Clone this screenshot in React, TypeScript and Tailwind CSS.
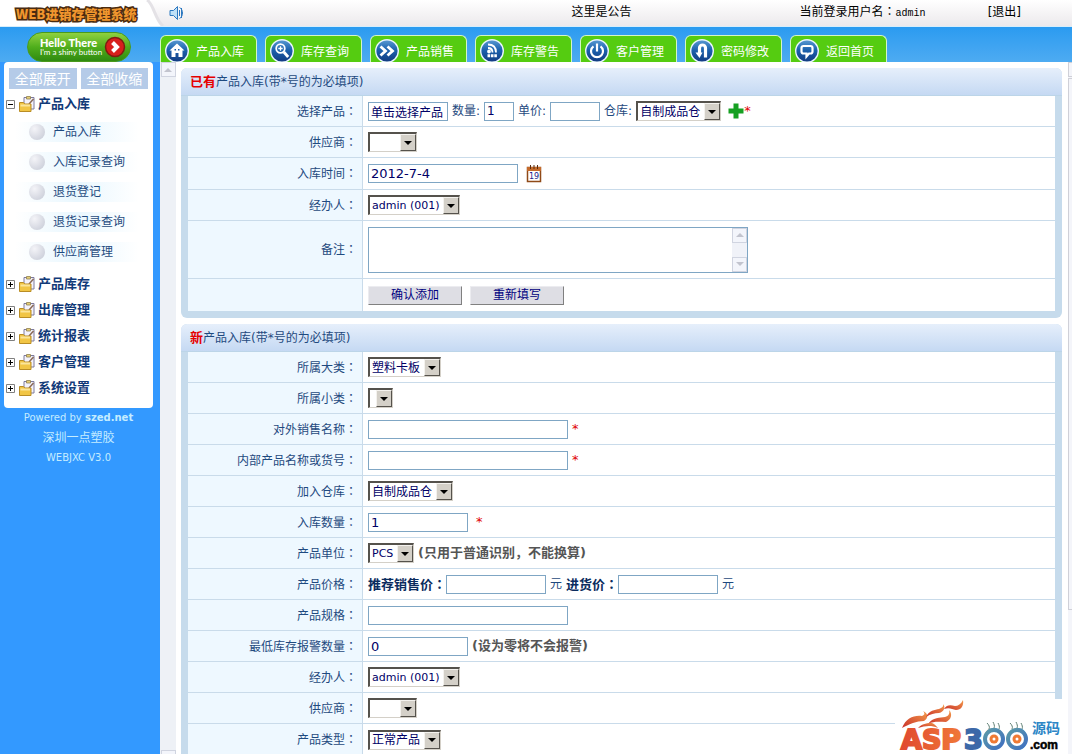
import { useState, type ReactNode } from "react";

const tabs = [
  { label: "产品入库", icon: "home" },
  { label: "库存查询", icon: "search" },
  { label: "产品销售", icon: "forward" },
  { label: "库存警告", icon: "rss" },
  { label: "客户管理", icon: "power" },
  { label: "密码修改", icon: "turn" },
  { label: "返回首页", icon: "chat" },
];

const openItems = ["产品入库", "入库记录查询", "退货登记", "退货记录查询", "供应商管理"];
const closedGroups = ["产品库存", "出库管理", "统计报表", "客户管理", "系统设置"];

function TabGlyph({ name }: { name: string }) {
  switch (name) {
    case "home":
      return (
        <g>
          <path d="M12 4.5 4.5 11.500h2V18h4v-4h3v4h4v-6.500h2z" fill="#fff" />
          <path d="M9.500 10h1.500v1.500H9.500zM13 10h1.500v1.500H13z" fill="#1c62ae" />
        </g>
      );
    case "search":
      return (
        <g fill="none" stroke="#fff" strokeWidth="1.8">
          <circle cx="10.5" cy="9.5" r="4.3" />
          <path d="M8.3 9.5h4.4M10.5 7.3v4.4" strokeWidth="1.3" />
          <path d="m13.8 13 4.4 5" strokeWidth="2.8" />
        </g>
      );
    case "forward":
      return <path d="m5.500 7.500 5 4.500-5 4.500M12.500 7.500l5 4.500-5 4.500" fill="none" stroke="#fff" strokeWidth="2.8" />;
    case "rss":
      return (
        <g fill="none" stroke="#fff" strokeWidth="1.8">
          <path d="M8 5.500c5 0 8 3 8 8M8 9c3 0 4.500 1.500 4.500 4.500" />
          <circle cx="9" cy="12.500" r="1" fill="#fff" />
          <path d="M7.500 16.800h9.500" strokeWidth="3" strokeDasharray="2.600 .8" />
        </g>
      );
    case "power":
      return (
        <g fill="none" stroke="#fff" strokeWidth="2.200">
          <path d="M8.500 7.300a6 6 0 1 0 7 0" />
          <path d="M12 4.500v8" />
        </g>
      );
    case "turn":
      return (
        <g>
          <path d="M15.500 18.500V9a3 3 0 0 0-6 0v6" fill="none" stroke="#fff" strokeWidth="3.200" />
          <path d="M5.500 13.500h7L9.500 19z" fill="#fff" />
        </g>
      );
    default:
      return (
        <path
          d="M8.500 7h7a2 2 0 0 1 2 2v3.500a2 2 0 0 1-2 2h-1.500l-2.500 3v-3h-3a2 2 0 0 1-2-2V9a2 2 0 0 1 2-2z"
          fill="none"
          stroke="#fff"
          strokeWidth="2.200"
        />
      );
  }
}

function TabIcon({ name }: { name: string }) {
  return (
    <svg viewBox="0 0 24 24" className="size-6 shrink-0" aria-hidden="true">
      <defs>
        <linearGradient id={`tab-${name}`} x1="0" y1="0" x2="0" y2="1">
          <stop offset="0" stopColor="#5b9bd3" />
          <stop offset=".45" stopColor="#1c62ae" />
          <stop offset="1" stopColor="#123a80" />
        </linearGradient>
      </defs>
      <circle cx="12" cy="12" r="11.3" fill={`url(#tab-${name})`} stroke="#e8f4fb" strokeWidth="1.4" />
      <TabGlyph name={name} />
    </svg>
  );
}

function FolderIcon() {
  return (
    <svg viewBox="0 0 16 16" className="size-4 shrink-0" aria-hidden="true">
      <path d="M5 1.500h10v11.500H5z" fill="#f4f2fb" stroke="#7d7a9c" />
      <path d="M7.500.5h4v2.500h-4z" fill="#e7cf77" stroke="#8f8050" strokeWidth=".8" />
      <path d="m10 8 4.500-5" stroke="#8a6a58" strokeWidth="1.500" />
      <path d="M.5 6.500h4l1.200 1.500H12v7.500H.5z" fill="#f1c545" stroke="#b98d25" />
      <path d="M1.500 8.500h9.500v2H1.500z" fill="#fbe59a" />
    </svg>
  );
}

function ToggleBox({ open }: { open: boolean }) {
  return (
    <svg viewBox="0 0 9 9" className="size-[9px] shrink-0" aria-hidden="true">
      <path d="M.5.5h8v8h-8z" fill="#fff" stroke="#808080" />
      <path d={open ? "M2 4.500h5" : "M2 4.500h5M4.500 2v5"} stroke="#000" />
    </svg>
  );
}

// Full-width colon that sits in the middle of its square
function Colon() {
  return <span className="font-['Noto_Sans_CJK_TC',sans-serif]">：</span>;
}

function Required() {
  return <span className="text-[13px] text-[#e00000]">*</span>;
}

function Select({ label, value, className }: { label: string; value: string; className: string }) {
  return (
    <span className={`relative inline-block h-5 shrink-0 ${className}`}>
      <select
        aria-label={label}
        className="block h-5 w-full appearance-none border border-t-2 border-l-2 border-[#d4d0c8] border-t-[#55524c] border-l-[#55524c] bg-white pl-[2px] text-[#000066]"
      >
        <option>{value}</option>
      </select>
      <span className="pointer-events-none absolute top-[2px] right-px flex h-[17px] w-4 items-center justify-center border border-[#f4f2ee] border-r-[#55524c] border-b-[#55524c] bg-[#d4d0c8]">
        <svg viewBox="0 0 8 4" className="h-1 w-2" aria-hidden="true">
          <path d="M0 0h8L4 4z" fill="#000" />
        </svg>
      </span>
    </span>
  );
}

function TextBox({ label, value = "", className }: { label: string; value?: string; className: string }) {
  return (
    <input
      type="text"
      aria-label={label}
      defaultValue={value}
      className={`h-[19px] shrink-0 border border-[#7fa6c4] bg-white px-[2px] text-[#000066] outline-none ${className}`}
    />
  );
}

function Row({
  label,
  height = "min-h-[31px]",
  children,
}: {
  label?: string;
  height?: string;
  children: ReactNode;
}) {
  return (
    <div className={`flex border-b border-[#c9dbea] last:border-b-0 ${height}`}>
      <div className="flex w-[175px] shrink-0 items-center justify-end border-r border-[#c9dbea] bg-[#eef8ff] pr-[5px]">
        {label ? (
          <span>
            {label}
            <Colon />
          </span>
        ) : null}
      </div>
      <div className="flex flex-1 items-center gap-1 px-[5px] whitespace-nowrap">{children}</div>
    </div>
  );
}

function Panel({ mark, children }: { mark: ReactNode; children: ReactNode }) {
  return (
    <section className="rounded-md bg-[#c6dbec] px-[7px] pb-[7px]">
      <h2 className="-mx-[7px] flex h-7 items-center rounded-t-md border-b border-[#bcd5e8] bg-linear-to-b from-[#e6effb] to-[#c5d9f3] pl-[9px]">
        <span>
          {mark}
          产品入库(带*号的为必填项)
        </span>
      </h2>
      <div className="bg-white">{children}</div>
    </section>
  );
}

function ArrowBox({ down }: { down?: boolean }) {
  return (
    <span className="flex h-[15px] w-[15px] items-center justify-center border border-[#d0d4e0] bg-[#f3f5fb]">
      <svg viewBox="0 0 8 4" className="h-1 w-2" aria-hidden="true">
        <path d={down ? "M0 0h8L4 4z" : "M0 4h8L4 0z"} fill="#c2c4ce" />
      </svg>
    </span>
  );
}

function Header() {
  return (
    <header className="shrink-0">
      <div className="flex h-[27px] items-center border-b border-[#d8eefb] bg-linear-to-b from-white to-[#ece9ec]">
        <div className="flex h-full w-[142px] shrink-0 items-center bg-white pt-[2px] pl-4">
          <span className="font-['Noto_Sans_CJK_SC',sans-serif] text-[13px] leading-5 font-black whitespace-nowrap text-[#f0962e] [paint-order:stroke] [-webkit-text-stroke:3px_#4a2c10]">
            WEB进销存管理系统
          </span>
        </div>
        <svg viewBox="0 0 22 26" className="h-[26px] w-[22px] shrink-0" aria-hidden="true">
          <path d="M0 0h5c7 4 8 20 16 26H0z" fill="#fff" />
          <path d="M5 0c7 4 8 20 16 26" fill="none" stroke="#e4e2e6" strokeWidth="3" />
        </svg>
        <svg viewBox="0 0 16 16" className="ml-[5px] size-4 shrink-0" fill="none" stroke="#2d78c0" aria-hidden="true">
          <path d="M1 5.500h3.500l4-4v13l-4-4H1z" fill="#bfe0f7" />
          <path d="M10.500 5v6M12.500 3v10" />
          <path d="M10.500 2.500c4 2 4 9 0 11" />
        </svg>
        <div className="flex min-w-0 flex-1 items-center justify-end pb-[2px] text-black">
          <span className="mr-[168px]">这里是公告</span>
          <span className="mr-[62px]">
            当前登录用户名
            <Colon />
            <span className="font-['Liberation_Mono',monospace] text-[10px]">admin</span>
          </span>
          <a href="#logout" className="mr-[51px]">
            [退出]
          </a>
        </div>
      </div>
      <div className="flex h-[35px] items-end bg-linear-to-b from-[#2a9bf0] to-[#4dabf2]">
        <div className="w-[160px] shrink-0 pl-[27px]">
          <button
            type="button"
            className="flex h-[30px] w-[104px] items-center justify-between rounded-full border border-[#4a9a1c] bg-linear-to-b from-[#8fd13f] via-[#4fae1c] to-[#2f8a10] pr-1 pl-3 text-left text-white"
          >
            <span className="font-['Lato',sans-serif] whitespace-nowrap">
              <span className="block text-[11px] leading-[11px] font-black">Hello There</span>
              <span className="block text-[8px] leading-[9px]">I'm a shiny button</span>
            </span>
            <svg viewBox="0 0 22 22" className="size-[22px] shrink-0" aria-hidden="true">
              <circle cx="11" cy="11" r="9.500" fill="#d81f1c" stroke="#7e1e10" strokeWidth="1.500" />
              <path d="m8.500 6.500 4.500 4.500-4.500 4.500" fill="none" stroke="#fff" strokeWidth="4" />
            </svg>
          </button>
        </div>
        <nav className="flex gap-2">
          {tabs.map((tab) => (
            <a
              key={tab.label}
              href={`#${tab.icon}`}
              className="flex h-[27px] w-[97px] shrink-0 items-center gap-[7px] overflow-hidden rounded-t-md border border-b-0 border-[#d5f5c8] bg-[#55cc11] pl-1 text-white"
            >
              <span className="pt-1">
                <TabIcon name={tab.icon} />
              </span>
              <span className="pt-[5px]">{tab.label}</span>
            </a>
          ))}
        </nav>
      </div>
    </header>
  );
}

function Sidebar() {
  const [expanded, setExpanded] = useState(true);

  return (
    <aside className="w-[160px] shrink-0 bg-[#3399ff] pr-[7px] pl-1">
      <div className="rounded-[4px] bg-white pt-[6px] pb-[7px]">
        <div className="flex gap-1 px-[5px] text-[14px] leading-5 text-white [text-shadow:1px_1px_0_#8fa9cc]">
          <button type="button" onClick={() => setExpanded(true)} className="h-[21px] flex-1 bg-[#b5cbe8]">
            全部展开
          </button>
          <button type="button" onClick={() => setExpanded(false)} className="h-[21px] flex-1 bg-[#b5cbe8]">
            全部收缩
          </button>
        </div>
        <button
          type="button"
          onClick={() => setExpanded((current) => !current)}
          className="mt-[2px] flex h-[26px] items-center pl-[2px] text-[13px] font-bold text-[#123a78]"
        >
          <ToggleBox open={expanded} />
          <span className="mr-[3px] ml-1">
            <FolderIcon />
          </span>
          产品入库
        </button>
        {expanded && (
          <ul className="pb-1">
            {openItems.map((item) => (
              <li key={item} className="flex h-[30px] items-center pl-[11px]">
                <a
                  href="#item"
                  className="flex h-5 w-[124px] items-center bg-linear-to-r from-white via-[#e9f7fe] to-white pl-[14px] text-[#1f4a80]"
                >
                  <span className="mr-2 size-4 rounded-full bg-radial-[at_35%_30%] from-[#f4f4f8] to-[#c4c8d4]" />
                  {item}
                </a>
              </li>
            ))}
          </ul>
        )}
        {closedGroups.map((group) => (
          <button
            key={group}
            type="button"
            className="flex h-[26px] items-center pl-[2px] text-[13px] font-bold text-[#123a78]"
          >
            <ToggleBox open={false} />
            <span className="mr-[3px] ml-1">
              <FolderIcon />
            </span>
            {group}
          </button>
        ))}
      </div>
      <div className="text-center text-[10px] leading-5 text-[#c4ecff]">
        <p>
          Powered by <b>szed.net</b>
        </p>
        <p className="text-[12px]">深圳一点塑胶</p>
        <p>WEBJXC V3.0</p>
      </div>
    </aside>
  );
}

function ExistingProductForm() {
  return (
    <Panel mark={<b className="text-[13px] text-[#e60000]">已有</b>}>
      <Row label="选择产品">
        <TextBox label="选择产品" value="单击选择产品" className="w-[80px] text-[12px]" />
        <span>数量:</span>
        <TextBox label="数量" value="1" className="w-[30px] text-[12px]" />
        <span>单价:</span>
        <TextBox label="单价" className="w-[50px] text-[12px]" />
        <span>仓库:</span>
        <Select label="仓库" value="自制成品仓" className="w-[85px] text-[12px]" />
        <span className="ml-[3px] flex items-center">
          <button type="button" aria-label="添加">
            <svg viewBox="0 0 16 16" className="size-4" aria-hidden="true">
              <path d="M5.500.5h5v5h5v5h-5v5h-5v-5h-5v-5h5z" fill="#16a022" />
            </svg>
          </button>
          <Required />
        </span>
      </Row>
      <Row label="供应商">
        <Select label="供应商" value="" className="w-[49px] text-[11px]" />
      </Row>
      <Row label="入库时间" height="min-h-8">
        <TextBox label="入库时间" value="2012-7-4" className="w-[150px] text-[13px]" />
        <button type="button" aria-label="选择日期" className="ml-1">
          <svg viewBox="0 0 16 18" className="h-[18px] w-4" aria-hidden="true">
            <path d="M1.500 2.500h13v14h-13z" fill="#fff" stroke="#8f4a18" strokeWidth="1.500" />
            <path d="M1 2h14v4H1z" fill="#c46a2a" />
            <path d="M4.500 0v4M8 0v4M11.500 0v4" stroke="#5c2c0c" />
            <text x="8" y="14" textAnchor="middle" fontSize="8" fontFamily="DejaVu Sans" fill="#20208c">
              19
            </text>
          </svg>
        </button>
      </Row>
      <Row label="经办人">
        <Select label="经办人" value="admin (001)" className="w-[92px] text-[11px]" />
      </Row>
      <Row label="备注" height="min-h-[58px]">
        <span className="relative inline-block">
          <textarea
            aria-label="备注"
            className="block h-[46px] w-[380px] resize-none border border-[#7fa6c4] bg-white pr-5 pl-1 outline-none [scrollbar-width:none]"
          />
          <span className="pointer-events-none absolute inset-y-px right-px flex flex-col justify-between bg-[#f0f2f8]">
            <ArrowBox />
            <ArrowBox down />
          </span>
        </span>
      </Row>
      <Row height="min-h-8">
        <button
          type="button"
          className="mr-1 h-[19px] w-[94px] border border-[#ececf0] border-r-[#808080] border-b-[#808080] bg-[#dedee4] leading-4 text-[#000080]"
        >
          确认添加
        </button>
        <button
          type="button"
          className="h-[19px] w-[94px] border border-[#ececf0] border-r-[#808080] border-b-[#808080] bg-[#dedee4] leading-4 text-[#000080]"
        >
          重新填写
        </button>
      </Row>
    </Panel>
  );
}

function NewProductForm() {
  return (
    <Panel mark={<b className="text-[13px] text-[#e60000]">新</b>}>
      <Row label="所属大类">
        <Select label="所属大类" value="塑料卡板" className="w-[73px] text-[12px]" />
      </Row>
      <Row label="所属小类">
        <Select label="所属小类" value="" className="w-[25px] text-[12px]" />
      </Row>
      <Row label="对外销售名称">
        <TextBox label="对外销售名称" className="w-[200px] text-[13px]" />
        <Required />
      </Row>
      <Row label="内部产品名称或货号">
        <TextBox label="内部产品名称或货号" className="w-[200px] text-[13px]" />
        <Required />
      </Row>
      <Row label="加入仓库">
        <Select label="加入仓库" value="自制成品仓" className="w-[85px] text-[12px]" />
      </Row>
      <Row label="入库数量">
        <TextBox label="入库数量" value="1" className="mr-1 w-[100px] text-[13px]" />
        <Required />
      </Row>
      <Row label="产品单位">
        <Select label="产品单位" value="PCS" className="w-[46px] text-[11px]" />
        <b className="text-[13px] text-[#555555]">(只用于普通识别，不能换算)</b>
      </Row>
      <Row label="产品价格">
        <label className="flex items-center">
          <b className="text-[13px] text-[#0b2c5e]">
            推荐销售价
            <Colon />
          </b>
          <TextBox label="推荐销售价" className="w-[100px] text-[13px]" />
        </label>
        <span>元</span>
        <label className="flex items-center">
          <b className="text-[13px] text-[#0b2c5e]">
            进货价
            <Colon />
          </b>
          <TextBox label="进货价" className="w-[100px] text-[13px]" />
        </label>
        <span>元</span>
      </Row>
      <Row label="产品规格">
        <TextBox label="产品规格" className="w-[200px] text-[13px]" />
      </Row>
      <Row label="最低库存报警数量">
        <TextBox label="最低库存报警数量" value="0" className="w-[100px] text-[13px]" />
        <b className="text-[13px] text-[#555555]">(设为零将不会报警)</b>
      </Row>
      <Row label="经办人">
        <Select label="经办人" value="admin (001)" className="w-[92px] text-[11px]" />
      </Row>
      <Row label="供应商">
        <Select label="供应商" value="" className="w-[49px] text-[11px]" />
      </Row>
      <Row label="产品类型">
        <Select label="产品类型" value="正常产品" className="w-[73px] text-[12px]" />
      </Row>
    </Panel>
  );
}

function Watermark() {
  return (
    <div className="pointer-events-none absolute right-[7px] bottom-0 bg-white">
      <svg viewBox="0 0 170 55" className="h-[55px] w-[170px]" role="img" aria-label="ASP300源码.com">
        <defs>
          <linearGradient id="flame" x1="0" y1="1" x2="1" y2="0">
            <stop offset="0" stopColor="#c9302a" />
            <stop offset="1" stopColor="#f39a4a" />
          </linearGradient>
          <linearGradient id="asp" x1="0" y1="0" x2="1" y2="0">
            <stop offset="0" stopColor="#e04a30" />
            <stop offset="1" stopColor="#f07838" />
          </linearGradient>
          <linearGradient id="ring" x1="0" y1="0" x2="1" y2="1">
            <stop offset="0" stopColor="#5a9aa8" />
            <stop offset="1" stopColor="#3f6fc0" />
          </linearGradient>
        </defs>
        <path d="M7 29c4-10 12-13 20-12 3-1 3-3 1-5 5 2 6 7 1 10-8 0-14 3-22 7z" fill="url(#flame)" />
        <path d="M31 18c3-7 9-7 13-8 3-1 5-3 4-5 3 3 1 8-4 9-5 0-8 1-13 4z" fill="url(#flame)" />
        <path d="M33 25c5-7 12-6 17-7 4-1 5-4 4-7 4 4 2 10-3 12-7 0-12-1-18 2z" fill="url(#flame)" />
        <path d="M49 10c3-5 7-4 11-3 3 0 6-2 8-6 1 6-2 10-7 10-4-1-7-3-12-1z" fill="url(#flame)" />
        <path d="M23 29c5-5 10-5 14-5 3 1 4 3 6 5-7-3-13-2-20 0z" fill="url(#flame)" />
        <g fontFamily="DejaVu Sans" fontWeight="bold" fontSize="27">
          <text x="6" y="50" fill="url(#asp)" stroke="url(#asp)" strokeWidth="2">
            ASP
          </text>
          <text x="69" y="50" fill="#3c68a8" stroke="#3c68a8" strokeWidth="2">
            3
          </text>
          <text x="89" y="50" fill="url(#ring)" stroke="url(#ring)" strokeWidth="2">
            0
          </text>
          <text x="113" y="50" fill="url(#ring)" stroke="url(#ring)" strokeWidth="2">
            0
          </text>
        </g>
        <g fill="#fff" stroke="url(#ring)" strokeWidth="4">
          <circle cx="99" cy="40" r="9" />
          <circle cx="122" cy="40" r="9" />
        </g>
        <circle cx="99" cy="40" r="4.500" fill="#ef7a34" />
        <circle cx="122" cy="40" r="4.500" fill="#ef7a34" />
        <circle cx="99" cy="40" r="1.500" fill="#fff" />
        <circle cx="122" cy="40" r="1.500" fill="#fff" />
        <path
          d="M94 30c1-2 0-4-2-6M99 29c1-2 0-4-1-6M104 30c1-2 0-4-1-6M117 30c1-2 0-4-2-6M122 29c1-2 0-4-1-6M127 30c1-2 0-4-1-6"
          fill="none"
          stroke="#5f7f74"
        />
        <text x="137" y="34" fontFamily="Noto Sans CJK SC" fontWeight="bold" fontSize="14" fill="#2c86c6">
          源码
        </text>
        <text x="135" y="50" fontFamily="Liberation Sans" fontWeight="bold" fontSize="12" stroke="#000" strokeWidth=".5">
          .com
        </text>
      </svg>
    </div>
  );
}

export default function App() {
  return (
    <div className="relative flex h-screen flex-col overflow-hidden bg-white font-['DejaVu_Sans','Noto_Sans_CJK_SC',sans-serif] text-[12px] leading-4 text-[#1f4a80]">
      <Header />
      <div className="flex min-h-0 flex-1">
        <Sidebar />
        <div className="flex w-4 shrink-0 flex-col items-center justify-between bg-[#eef1f6]">
          <ArrowBox />
          <span className="h-1 w-[15px] border border-b-0 border-[#d0d4e0] bg-[#f3f5fb]" />
        </div>
        <main className="flex min-w-0 flex-1 flex-col gap-[6px] overflow-y-auto pt-[6px] pr-[6px] pl-[5px] [scrollbar-width:none]">
          <ExistingProductForm />
          <NewProductForm />
        </main>
        <div className="flex w-1 shrink-0 flex-col bg-[#f4f5fa]">
          <span className="h-[15px] border border-r-0 border-[#cfd0d8]" />
          <span className="mt-px h-[532px] border border-r-0 border-[#cfd0d8]" />
        </div>
      </div>
      <Watermark />
    </div>
  );
}
